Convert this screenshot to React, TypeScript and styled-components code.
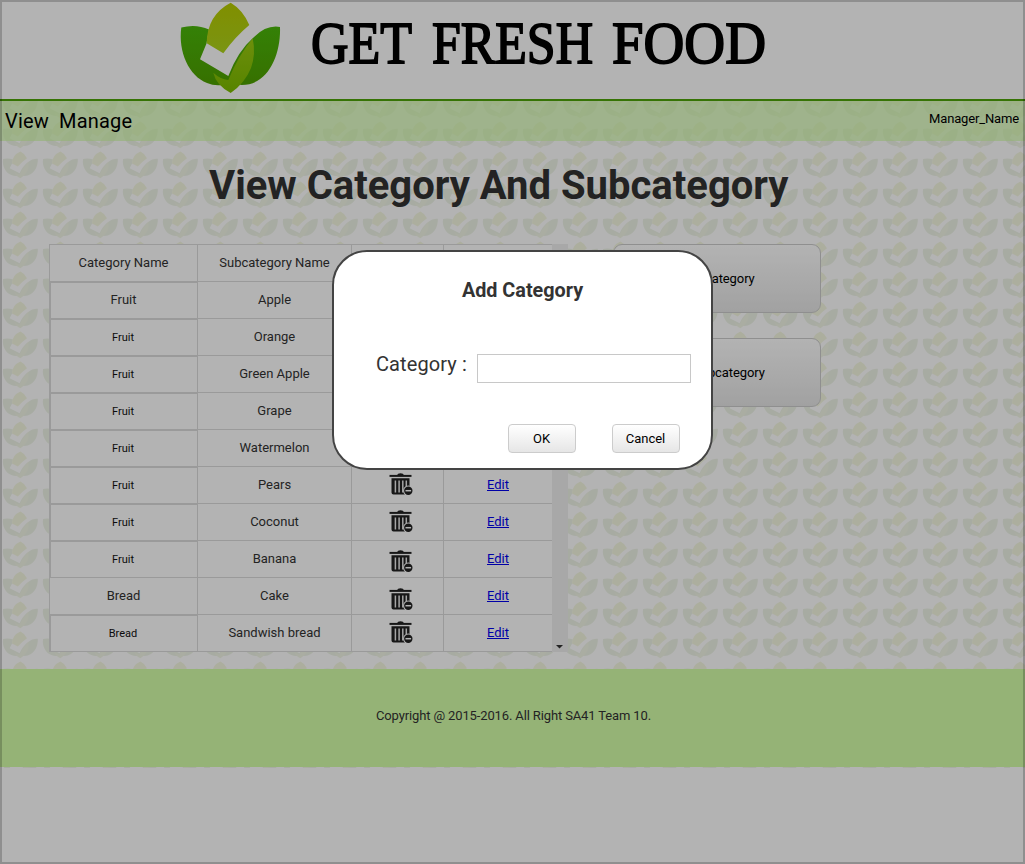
import React from 'react';
import styled, { createGlobalStyle } from 'styled-components';

const Global = createGlobalStyle`
  *, *::before, *::after { box-sizing: border-box; }
  body { margin: 0; background: #fff; font-family: Roboto, "Liberation Sans", sans-serif; font-size: 13px; color: #333; overflow: hidden; }
`;

const Page = styled.div`
  position: relative;
  height: 864px;
  width: 1025px;
  overflow: hidden;
`;

const Header = styled.header`
  height: 101px;
  border-bottom: 2px solid #4ea408;
  padding: 2px 0 0 176px;
  display: flex;
`;

const Patterned = styled.div`
  position: relative;
  height: 667px;
  display: flex;
  flex-direction: column;
`;

const Backdrop = styled.svg`
  position: absolute;
  inset: 0;
  z-index: -1;
`;

const Nav = styled.nav`
  height: 40px;
  padding: 0 6px 0 5px;
  display: flex;
  justify-content: space-between;
  background: rgba(211, 255, 169, 0.64);
  color: #000;
`;

const NavLinks = styled.div`
  display: flex;
  gap: 10px;
  font-size: 20px;
  line-height: 40px;
  letter-spacing: 0.2px;
`;

const UserName = styled.span`
  line-height: 36px;
  letter-spacing: -0.15px;
`;

const Title = styled.h1`
  margin: 21px 0 0 209px;
  height: 48px;
  line-height: 48px;
  font-size: 40px;
  font-weight: 700;
  white-space: nowrap;
`;

const Content = styled.main`
  display: flex;
  align-items: flex-start;
  height: 425px;
  margin-top: 34px;
  padding-left: 49px;
`;

const Grid = styled.div`
  display: grid;
  grid-template-columns: 149px 154px 92px 109px;
  grid-auto-rows: 37px;
  width: 504px;
  border-top: 1px solid #dcdcdc;
  background: #fff;
`;

const Cell = styled.div<{ $first?: boolean; $inset?: boolean; $small?: boolean; $last?: boolean }>`
  display: flex;
  align-items: center;
  justify-content: center;
  padding: 0 ${p => (p.$last ? '1px' : p.$small ? '1px' : '0')} ${p => (p.$small ? '0' : '2px')} 0;
  border-bottom: 1px solid #dcdcdc;
  border-right: ${p => (p.$last ? '0' : '1px')} solid #dcdcdc;
  border-left: ${p => (p.$first ? '1px' : '0')} solid #dcdcdc;
  box-shadow: ${p => (p.$inset ? 'inset 1px 1px 0 #dcdcdc' : 'none')};
  font-size: ${p => (p.$small ? '11px' : '13px')};
  color: ${p => (p.$small ? '#111' : '#333')};
`;

const EditLink = styled.a`
  color: #0000ee;
  text-decoration: underline;
`;

const ScrollTrack = styled.div`
  width: 16px;
  height: 408px;
  margin-left: -1px;
  background: #f0f0f0;
  display: flex;
  align-items: flex-end;
  justify-content: center;
  padding-bottom: 3px;
`;

const Actions = styled.div`
  display: flex;
  flex-direction: column;
  gap: 25px;
  margin-left: 45px;
`;

const BigButton = styled.button`
  width: 208px;
  height: 69px;
  border: 1px solid #ccc;
  border-radius: 9px;
  background: linear-gradient(#fff, #e6e6e6);
  font: 13px Roboto, sans-serif;
  letter-spacing: -0.1px;
  color: #000;
  padding: 0 2px 0 0;
`;

const Footer = styled.footer`
  height: 98px;
  background: #d4ffa9;
  text-align: center;
  line-height: 94px;
  letter-spacing: -0.13px;
  padding-left: 2px;
  margin-bottom: 1px;
`;

const Overlay = styled.div`
  position: absolute;
  inset: 0;
  border: 2px solid rgba(0, 0, 0, 0.2);
  background: rgba(0, 0, 0, 0.298);
`;

const Dialog = styled.section`
  position: absolute;
  left: 332px;
  top: 250px;
  width: 381px;
  height: 220px;
  border: 2px solid #444;
  border-radius: 35px;
  background: #fff;
  display: flex;
  flex-direction: column;
`;

const DialogTitle = styled.h2`
  margin: 27px 0 0;
  font-size: 19.8px;
  line-height: 24px;
  text-align: center;
`;

const Field = styled.label`
  display: flex;
  margin: 51px 20px 0 42px;
  justify-content: space-between;
  font-size: 20px;
  line-height: 21px;
  letter-spacing: 0.1px;
`;

const Input = styled.input`
  width: 214px;
  height: 29px;
  border: 1px solid #c8c8c8;
  background: #fff;
`;

const Buttons = styled.div`
  display: flex;
  justify-content: flex-end;
  gap: 36px;
  margin: 41px 31px 0 0;
`;

const Button = styled.button`
  width: 68px;
  height: 29px;
  border: 1px solid #ccc;
  border-radius: 4px;
  background: linear-gradient(#fff, #e6e6e6);
  font: 13px Roboto, sans-serif;
  color: #000;
  padding: 0 1px 0 0;
`;

const TrashSvg = styled.svg<{ $shift: number }>`
  margin: ${p => p.$shift * 2}px 0 0 6px;
`;

const Trash = ({ shift = 0 }: { shift?: number }) => (
  <TrashSvg $shift={shift} width="24" height="22" viewBox="0 0 24 22">
    <path d="M.5 2.900h22" stroke="#222" strokeWidth="2" />
    <path d="M8 2.200Q8.500.3 11.500.3Q14.500.3 15 2.200Z" fill="#222" />
    <path d="M2.500 5.200h18V13.500h-3V21.500h-13q-2 0-2-2Z" fill="#222" />
    <path d="M6.400 7.500v12M10.100 7.500v12M13.800 7.500v12M17.300 7.500v7" stroke="#ececec" strokeWidth="1.500" />
    <circle cx="19.300" cy="17.800" r="5.200" fill="#fff" />
    <circle cx="19.300" cy="17.800" r="4.200" fill="#222" />
    <path d="M16.500 17.700h5.600" stroke="#fff" strokeWidth="1.500" />
  </TrashSvg>
);

const LeafShapes = ({ light, dark, mid }: { light: string; dark: string; mid: string }) => (
  <>
    <path d="M5.300 25.500Q20 21.500 33 27.500L30.500 41.500L24 57.300L52.300 74L56 76L46 83Q38 84 31 81C13 74 2 50 5.300 25.500Z" fill={dark} />
    <path d="M52.300 74Q62 49 76.700 36.300Q90 22.500 104 25C105 52 93 83 65.700 83L50 80Z" fill={dark} />
    <path d="M54.700.7Q67 8 73.300 23Q59 35 47.300 51.300L30.700 41.300Q31 13 54.700.7Z" fill={light} />
    <path d="M37.300 70.700Q44 77 52.300 78Q62 54 76.700 36.300Q80 52 75 66Q69 81 54.700 91Q40 83 37.300 70.700Z" fill={mid} />
  </>
);

const Logo = () => (
  <svg width="600" height="96" viewBox="0 0 600 96">
    <defs>
      <linearGradient id="leafDark" x1="0" y1="0" x2="0" y2="1">
        <stop offset="0" stopColor="#4bb80a" />
        <stop offset="1" stopColor="#4ea000" />
      </linearGradient>
      <linearGradient id="leafLight" x1="0" y1="0" x2="0" y2="1">
        <stop offset="0" stopColor="#b8cc00" />
        <stop offset="1" stopColor="#aed41c" />
      </linearGradient>
      <linearGradient id="leafMid" x1="0" y1="0" x2="0" y2="1">
        <stop offset="0" stopColor="#9ccc10" />
        <stop offset="1" stopColor="#7cbc00" />
      </linearGradient>
    </defs>
    <LeafShapes light="url(#leafLight)" dark="url(#leafDark)" mid="url(#leafMid)" />
    <g fontFamily="Liberation Serif, serif" fontSize="60" fill="#000" stroke="#000" strokeWidth="1.800">
      <text x="135" y="61" textLength="101" lengthAdjust="spacingAndGlyphs">GET</text>
      <text x="256" y="61" textLength="161" lengthAdjust="spacingAndGlyphs">FRESH</text>
      <text x="436" y="61" textLength="154" lengthAdjust="spacingAndGlyphs">FOOD</text>
    </g>
  </svg>
);

const LeafBackdrop = () => (
  <Backdrop width="1025" height="667">
    <defs>
      <pattern id="leaves" width="40" height="30" y="20" patternUnits="userSpaceOnUse">
        <g transform="translate(1.200 .4) scale(.352 .295)">
          <LeafShapes light="#f6f8e2" dark="#eef4e7" mid="#f3f7e7" />
        </g>
      </pattern>
    </defs>
    <rect width="1025" height="667" fill="url(#leaves)" />
  </Backdrop>
);

type Row = { category: string; sub: string; small?: boolean; shift?: number; covered?: boolean };

const rows: Row[] = [
  { category: 'Fruit', sub: 'Apple', covered: true },
  { category: 'Fruit', sub: 'Orange', small: true, covered: true },
  { category: 'Fruit', sub: 'Green Apple', small: true, covered: true },
  { category: 'Fruit', sub: 'Grape', small: true, covered: true },
  { category: 'Fruit', sub: 'Watermelon', small: true, covered: true },
  { category: 'Fruit', sub: 'Pears', small: true },
  { category: 'Fruit', sub: 'Coconut', small: true },
  { category: 'Fruit', sub: 'Banana', small: true, shift: 3 },
  { category: 'Bread', sub: 'Cake', shift: 4 },
  { category: 'Bread', sub: 'Sandwish bread', small: true },
];

export default function App() {
  return (
    <Page>
      <Global />
      <Header><Logo /></Header>
      <Patterned>
        <LeafBackdrop />
        <Nav>
          <NavLinks><span>View</span><span>Manage</span></NavLinks>
          <UserName>Manager_Name</UserName>
        </Nav>
        <Title>View Category And Subcategory</Title>
        <Content>
          <Grid>
            <Cell $first>Category Name</Cell>
            <Cell>Subcategory Name</Cell>
            <Cell />
            <Cell $last />
            {rows.map(({ category, sub, small, shift, covered }) => (
              <React.Fragment key={sub}>
                <Cell $first $inset={sub !== 'Cake'} $small={small}>{category}</Cell>
                <Cell>{sub}</Cell>
                <Cell>{!covered && <Trash shift={shift} />}</Cell>
                <Cell $last>{!covered && <EditLink>Edit</EditLink>}</Cell>
              </React.Fragment>
            ))}
          </Grid>
          <ScrollTrack>
            <svg width="8" height="4" viewBox="0 0 8 4"><path d="M0 0h7L3.500 3.500Z" fill="#333" /></svg>
          </ScrollTrack>
          <Actions>
            <BigButton>Add Category</BigButton>
            <BigButton>Add Subcategory</BigButton>
          </Actions>
        </Content>
        <Footer>Copyright @ 2015-2016. All Right SA41 Team 10.</Footer>
      </Patterned>
      <Overlay />
      <Dialog>
        <DialogTitle>Add Category</DialogTitle>
        <Field>Category :<Input /></Field>
        <Buttons>
          <Button>OK</Button>
          <Button>Cancel</Button>
        </Buttons>
      </Dialog>
    </Page>
  );
}
